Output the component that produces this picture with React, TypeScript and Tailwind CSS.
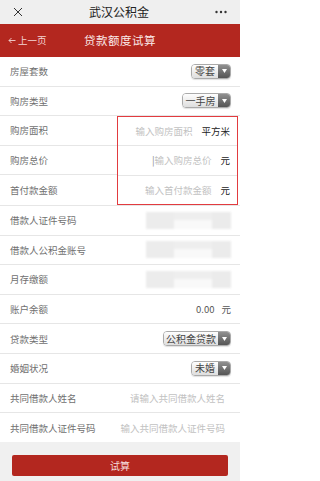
import React from "react";

const font = { fontFamily: '"Noto Sans CJK SC", "Noto Sans", sans-serif' };

function Select({ value, w }: { value: string; w: string }) {
  return (
    <div
      className={`flex h-[15px] ${w} overflow-hidden rounded-[4px] border border-[#aaaaaa] shadow-[0_1px_1px_rgba(0,0,0,0.12)]`}
    >
      <div className="flex flex-1 items-center justify-center bg-gradient-to-b from-[#fefefe] to-[#dedede] text-[10px] leading-none text-[#444]">
        {value}
      </div>
      <div className="flex w-[12px] items-center justify-center bg-gradient-to-b from-[#909090] to-[#555555]">
        <svg width="5" height="4" viewBox="0 0 5 4">
          <path d="M0 0h5L2.5 4z" fill="#fff" />
        </svg>
      </div>
    </div>
  );
}

function Blur() {
  return (
    <div className="flex h-[17px] w-[85px] blur-[1px]">
      <div className="w-[28px] bg-[#ececec]" />
      <div className="flex w-[38px] flex-col">
        <div className="h-[8px] bg-[#eeeeee]" />
        <div className="flex-1 bg-[#f9f9f9]" />
      </div>
      <div className="w-[19px] bg-[#ebebeb]" />
    </div>
  );
}

function Row({ label, children }: { label: string; children?: React.ReactNode }) {
  return (
    <div className="flex h-[29.6px] items-center justify-between border-b border-[#e6e6e6] pl-[10px] pr-[9px]">
      <span className="text-[9.5px] text-[#707070]">{label}</span>
      {children}
    </div>
  );
}

function Input({ placeholder, unit, caret }: { placeholder: string; unit?: string; caret?: boolean }) {
  return (
    <div className="flex items-center text-[9.5px]">
      <span className="text-[#c2c2c2]">
        {caret && <span className="text-[#888]">|</span>}
        {placeholder}
      </span>
      {unit && <span className="ml-[9px] text-[#222]">{unit}</span>}
    </div>
  );
}

const boxed = [
  { label: "购房面积", placeholder: "输入购房面积", unit: "平方米" },
  { label: "购房总价", placeholder: "输入购房总价", unit: "元", caret: true },
  { label: "首付款金额", placeholder: "输入首付款金额", unit: "元" },
];

export default function App() {
  return (
    <div className="flex h-[481px] w-[240px] flex-col overflow-hidden bg-[#f0f0f0]" style={font}>
      <div className="flex h-[24px] items-center justify-between bg-[#efefef] px-[13px]">
        <svg width="10" height="10" viewBox="0 0 10 10">
          <path d="M1 1l8 8M9 1l-8 8" stroke="#333" strokeWidth="1" />
        </svg>
        <span className="text-[12px] text-[#222]">武汉公积金</span>
        <svg width="12" height="4" viewBox="0 0 12 4">
          <circle cx="1.5" cy="2" r="1.2" fill="#333" />
          <circle cx="6" cy="2" r="1.2" fill="#333" />
          <circle cx="10.5" cy="2" r="1.2" fill="#333" />
        </svg>
      </div>
      <div className="relative flex h-[33px] items-center justify-center bg-[#b3271f]">
        <span className="absolute left-[8px] flex items-center text-[9.5px] text-[#f3d6d4]">
          <svg width="8" height="7" viewBox="0 0 8 7" className="mr-[2px]">
            <path d="M7.5 3.5H1M3.5 1L1 3.5 3.5 6" stroke="#f3d6d4" strokeWidth="0.9" fill="none" />
          </svg>
          上一页
        </span>
        <span className="text-[11.5px] tracking-[0.5px] text-[#fbeae9]">贷款额度试算</span>
      </div>
      <div className="bg-white">
        <Row label="房屋套数">
          <Select value="零套" w="w-[40px]" />
        </Row>
        <Row label="购房类型">
          <Select value="一手房" w="w-[49px]" />
        </Row>
        <div className="flex border-b border-[#e6e6e6]">
          <div className="flex w-[117px] flex-col">
            {boxed.map((b, i) => (
              <div
                key={b.label}
                className={`flex h-[29.6px] items-center pl-[10px] ${i < 2 ? "border-b border-[#e6e6e6]" : ""}`}
              >
                <span className="text-[9.5px] text-[#707070]">{b.label}</span>
              </div>
            ))}
          </div>
          <div className="mr-[2px] flex flex-1 flex-col border border-[#e23b3f]">
            {boxed.map((b, i) => (
              <div
                key={b.label}
                className={`flex flex-1 items-center justify-end pr-[7px] ${i < 2 ? "border-b border-[#e6e6e6]" : ""}`}
              >
                <Input placeholder={b.placeholder} unit={b.unit} caret={b.caret} />
              </div>
            ))}
          </div>
        </div>
        <Row label="借款人证件号码">
          <Blur />
        </Row>
        <Row label="借款人公积金账号">
          <Blur />
        </Row>
        <Row label="月存缴额">
          <Blur />
        </Row>
        <Row label="账户余额">
          <div className="flex items-center text-[9.5px] text-[#555]">
            <span>0.00</span>
            <span className="ml-[7px]">元</span>
          </div>
        </Row>
        <Row label="贷款类型">
          <Select value="公积金贷款" w="w-[68px]" />
        </Row>
        <Row label="婚姻状况">
          <Select value="未婚" w="w-[40px]" />
        </Row>
        <Row label="共同借款人姓名">
          <span className="pr-[6px] text-[9.5px] text-[#c2c2c2]">请输入共同借款人姓名</span>
        </Row>
        <div className="flex h-[29px] items-center justify-between pl-[10px] pr-[9px]">
          <span className="text-[9.5px] text-[#707070]">共同借款人证件号码</span>
          <span className="pr-[6px] text-[9.5px] text-[#c2c2c2]">输入共同借款人证件号码</span>
        </div>
      </div>
      <div className="px-[12px] pt-[13px]">
        <button className="flex h-[21px] w-full items-center justify-center rounded-[2px] bg-[#b3271f] text-[10px] text-[#f5dcda]">
          试算
        </button>
      </div>
    </div>
  );
}
